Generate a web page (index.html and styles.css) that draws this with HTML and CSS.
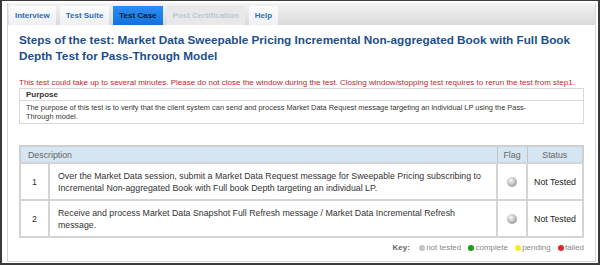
FILE: index.html
```html
<!DOCTYPE html>
<html>
<head>
    <title>Test Case</title>
    <link rel="stylesheet" href="styles.css">
</head>
<body>
  <div class="frame">
  <div class="panel">

    <div class="tabs">
        <div class="tab">Interview</div>
        <div class="tab">Test Suite</div>
        <div class="tab active">Test Case</div>
        <div class="tab disabled">Post Certification</div>
        <div class="tab">Help</div>
    </div>

    <div class="content">
        <h1>Steps of the test: Market Data Sweepable Pricing Incremental Non-aggregated Book with Full Book Depth Test for Pass-Through Model</h1>

        <p class="warn">This test could take up to several minutes. Please do not close the window during the test. Closing window/stopping test requires to rerun the test from step1.</p>

        <div class="purpose">
            <div class="purpose-head">Purpose</div>
            <div class="purpose-body">The purpose of this test is to verify that the client system can send and process Market Data Request message targeting an individual LP using the Pass-Through model.</div>
        </div>

        <table class="steps">
            <tr>
                <th colspan="2" class="desc-head">Description</th>
                <th class="flag-col">Flag</th>
                <th class="status-col">Status</th>
            </tr>
            <tr>
                <td class="num">1</td>
                <td class="desc">Over the Market Data session, submit a Market Data Request message for Sweepable Pricing subscribing to Incremental Non-aggregated Book with Full book Depth targeting an individual LP.</td>
                <td class="flag"><span class="ball"></span></td>
                <td class="status">Not Tested</td>
            </tr>
            <tr>
                <td class="num">2</td>
                <td class="desc">Receive and process Market Data Snapshot Full Refresh message / Market Data Incremental Refresh message.</td>
                <td class="flag"><span class="ball"></span></td>
                <td class="status">Not Tested</td>
            </tr>
        </table>

        <div class="key">
            <b>Key:</b>
            <span class="dot grey"></span>not tested
            <span class="dot green"></span>complete
            <span class="dot yellow"></span>pending
            <span class="dot red"></span>failed
        </div>
    </div>

  </div>
  </div>
</body>
</html>
```

FILE: styles.css
```css
html, body {
  margin: 0;
  padding: 0;
}

body {
  font-family: 'Liberation Sans', Arial, sans-serif;
  color: #333;
  background: #fff;
}

.frame {
  width: 600px;
  height: 265px;
  box-sizing: border-box;
  border: 2px solid #3a3a3a;
  border-top-width: 1px;
  padding: 2px 2px 1px 5px;
  display: flex;
}

.panel {
  flex: 1;
  border: 1px solid #d6d6d6;
  border-top: 0;
  display: flex;
  flex-direction: column;
}

.tabs {
  height: 22px;
  display: flex;
  align-items: flex-end;
  padding-left: 1px;
  background: linear-gradient(#f3f3f3, #dadada);
  border-radius: 0 3px 0 0;
}

.tab {
  height: 19px;
  line-height: 19px;
  padding: 0 6px;
  margin-right: 4px;
  font-size: 8px;
  font-weight: bold;
  color: #2f6db4;
  background: linear-gradient(#fafbfc, #eef0f3);
}

.tab.active {
  color: #0c1c30;
  background: linear-gradient(#2d8df2, #1371de);
}

.tab.disabled {
  color: #bcc7d3;
  background: #e8e8e8;
}

.content {
  padding: 7px 11px 0 11px;
}

h1 {
  margin: 0;
  font-size: 11.75px;
  line-height: 16px;
  color: #1b4f8c;
}

.warn {
  margin: 14px 0 0 0;
  font-size: 8px;
  line-height: 9px;
  color: #c0272d;
}

.purpose {
  margin-top: 1px;
  border: 1px solid #d9d9d9;
  font-size: 7.4px;
}

.purpose-head {
  font-weight: bold;
  font-size: 8px;
  height: 11px;
  line-height: 11px;
  padding: 0 6px;
  border-bottom: 1px solid #d9d9d9;
}

.purpose-body {
  padding: 2px 50px 2px 6px;
  line-height: 9px;
}

.steps {
  width: 100%;
  margin-top: 21px;
  border-collapse: collapse;
  border: 2px solid #cfcfcf;
  font-size: 8.8px;
}

.steps th {
  background: #d5e5f1;
  color: #666;
  font-weight: normal;
  height: 15px;
  padding: 0;
  border: 1px solid #c2c2c2;
}

.steps .desc-head {
  text-align: left;
  padding-left: 7px;
}

.steps td {
  border: 2px solid #d4d4d4;
  height: 35px;
  padding: 0;
}

.num {
  width: 27px;
  text-align: center;
}

.desc {
  padding: 0 8px !important;
  line-height: 12px;
}

.flag-col, .flag {
  width: 28px;
  text-align: center;
}

.status-col, .status {
  width: 54px;
  text-align: center;
}

.status {
  color: #222;
}

.ball {
  display: inline-block;
  width: 10px;
  height: 10px;
  border-radius: 50%;
  vertical-align: middle;
  background: radial-gradient(circle at 40% 35%, #fafafa, #b5b5b5 55%, #808080);
}

.key {
  margin-top: 5px;
  text-align: right;
  font-size: 8px;
  color: #888;
}

.key b {
  color: #666;
  margin-right: 2px;
}

.dot {
  display: inline-block;
  width: 6px;
  height: 6px;
  border-radius: 50%;
  margin: 0 1px 0 5px;
  vertical-align: -1px;
}

.dot.grey { background: #c4c4c4; }
.dot.green { background: #1a9b1a; }
.dot.yellow { background: #f2ef2a; }
.dot.red { background: #e0262a; }
```
